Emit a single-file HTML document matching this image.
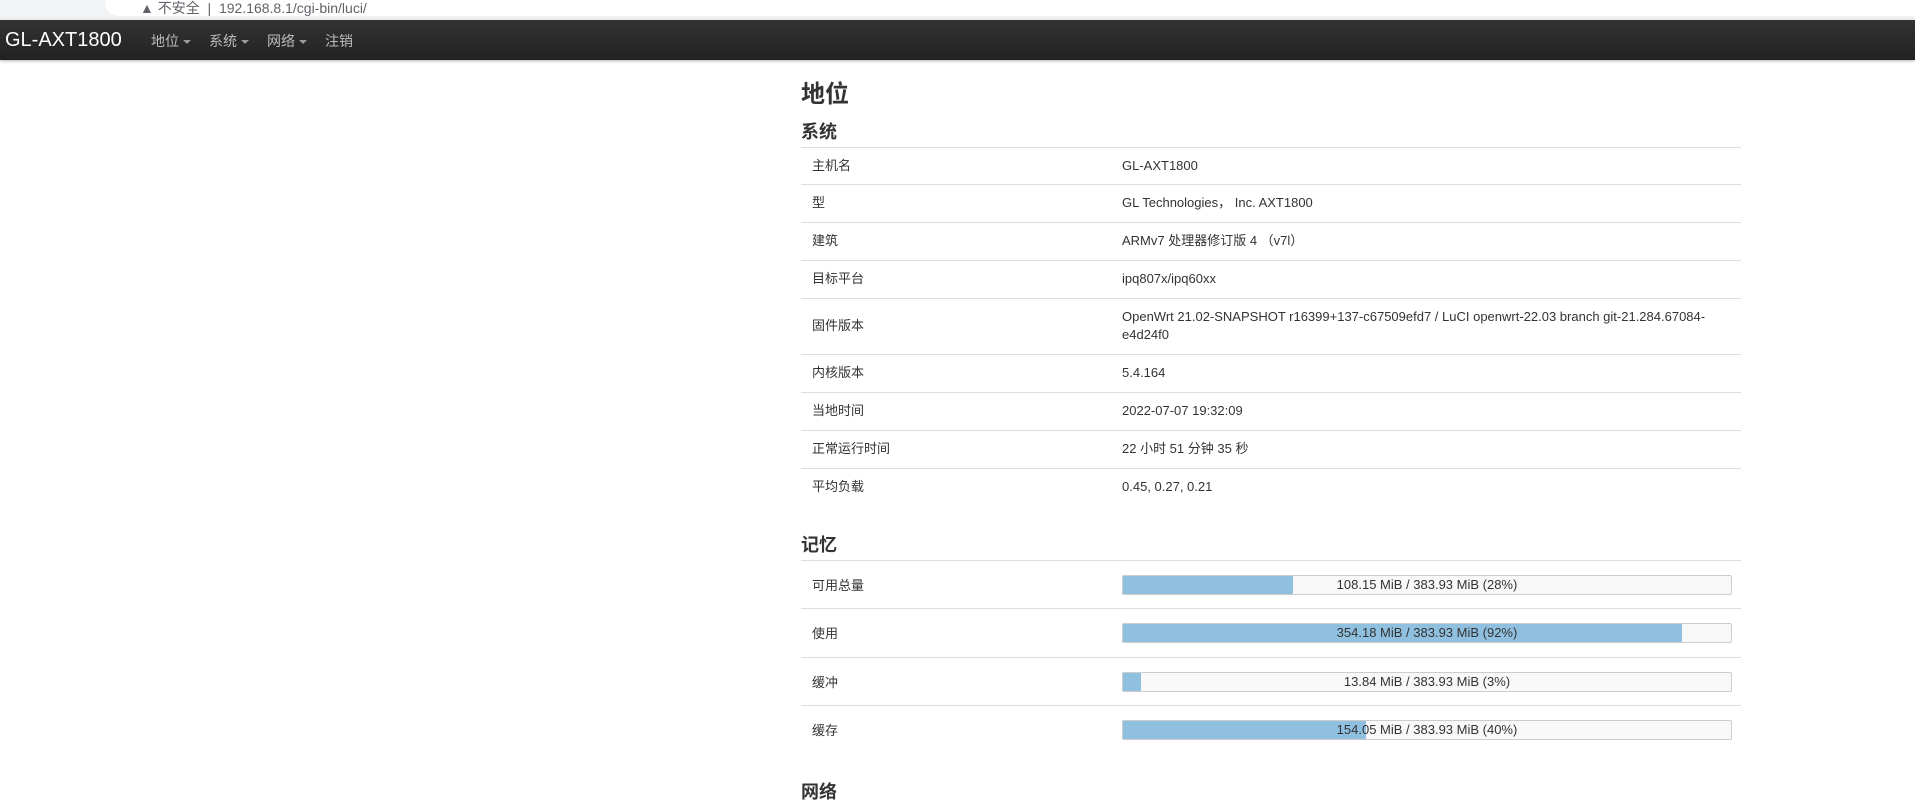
<!DOCTYPE html>
<html><head><meta charset="utf-8"><style>
body{margin:0;width:1915px;height:788px;overflow:hidden;background:#fff;font-family:"Liberation Sans","Noto Sans CJK SC",sans-serif;color:#333;position:relative}
.chrome{position:absolute;left:0;top:0;width:1915px;height:20px;background:#f1f3f4}
.url{position:absolute;left:105px;top:-12px;width:1820px;height:28px;background:#fff;border-radius:14px}
.url span{position:absolute;top:10px;font-size:14px;color:#5f6368}
.nav{position:absolute;left:0;top:20px;width:1915px;height:40px;background:linear-gradient(#333,#222);box-shadow:0 1px 3px rgba(0,0,0,.3)}
.logo{position:absolute;left:5px;top:9px;color:#fff;font-size:20px}
.m{position:absolute;top:11px;color:#bbb;font-size:14px}
.m i{display:inline-block;width:0;height:0;border-left:4px solid transparent;border-right:4px solid transparent;border-top:4px solid #999;margin-left:4px;vertical-align:middle}
h1{position:absolute;left:801px;top:74px;margin:0;font-size:24px;font-weight:bold}
h3{position:absolute;left:801px;margin:0;font-size:18px;font-weight:bold}
.row{position:absolute;left:801px;width:940px;border-top:1px solid #ddd;font-size:13px}
.row .l{position:absolute;left:11px;line-height:18px}
.row .v{position:absolute;left:321px;right:20px;line-height:18px}
.bar{position:absolute;left:321px;width:608px;height:18px;border:1px solid #ccc;border-radius:2px;background:#f8f8f8;font-size:13px;text-align:center;line-height:18px}
.bar b{position:absolute;left:0;top:0;bottom:0;background:#90c0e0}
.bar span{position:relative}
</style></head><body>
<div class="chrome"><div class="url"><span style="left:35px">▲ 不安全 &nbsp;|&nbsp; 192.168.8.1/cgi-bin/luci/</span></div></div>
<div class="nav"><div class="logo">GL-AXT1800</div>
<div class="m" style="left:151px">地位<i></i></div>
<div class="m" style="left:209px">系统<i></i></div>
<div class="m" style="left:267px">网络<i></i></div>
<div class="m" style="left:325px">注销</div></div>
<h1>地位</h1>
<h3 style="top:118px">系统</h3>
<div class="row" style="top:147px;height:37px"><span class="l" style="top:9px">主机名</span><span class="v" style="top:9px">GL-AXT1800</span></div>
<div class="row" style="top:184px;height:37px"><span class="l" style="top:9px">型</span><span class="v" style="top:9px">GL Technologies， Inc. AXT1800</span></div>
<div class="row" style="top:222px;height:37px"><span class="l" style="top:9px">建筑</span><span class="v" style="top:9px">ARMv7 处理器修订版 4 （v7l）</span></div>
<div class="row" style="top:260px;height:37px"><span class="l" style="top:9px">目标平台</span><span class="v" style="top:9px">ipq807x/ipq60xx</span></div>
<div class="row" style="top:298px;height:55px"><span class="l" style="top:18px">固件版本</span><span class="v" style="top:9px">OpenWrt 21.02-SNAPSHOT r16399+137-c67509efd7 / LuCI openwrt-22.03 branch git-21.284.67084-e4d24f0</span></div>
<div class="row" style="top:354px;height:37px"><span class="l" style="top:9px">内核版本</span><span class="v" style="top:9px">5.4.164</span></div>
<div class="row" style="top:392px;height:37px"><span class="l" style="top:9px">当地时间</span><span class="v" style="top:9px">2022-07-07 19:32:09</span></div>
<div class="row" style="top:430px;height:37px"><span class="l" style="top:9px">正常运行时间</span><span class="v" style="top:9px">22 小时 51 分钟 35 秒</span></div>
<div class="row" style="top:468px;height:37px"><span class="l" style="top:9px">平均负载</span><span class="v" style="top:9px">0.45, 0.27, 0.21</span></div>
<h3 style="top:531px">记忆</h3>
<div class="row" style="top:560px;height:47px"><span class="l" style="top:16px">可用总量</span><div class="bar" style="top:14px"><b style="width:28%"></b><span>108.15 MiB / 383.93 MiB (28%)</span></div></div>
<div class="row" style="top:608px;height:47px"><span class="l" style="top:16px">使用</span><div class="bar" style="top:14px"><b style="width:92%"></b><span>354.18 MiB / 383.93 MiB (92%)</span></div></div>
<div class="row" style="top:657px;height:47px"><span class="l" style="top:16px">缓冲</span><div class="bar" style="top:14px"><b style="width:3%"></b><span>13.84 MiB / 383.93 MiB (3%)</span></div></div>
<div class="row" style="top:705px;height:47px"><span class="l" style="top:16px">缓存</span><div class="bar" style="top:14px"><b style="width:40%"></b><span>154.05 MiB / 383.93 MiB (40%)</span></div></div>
<h3 style="top:778px">网络</h3>
</body></html>
